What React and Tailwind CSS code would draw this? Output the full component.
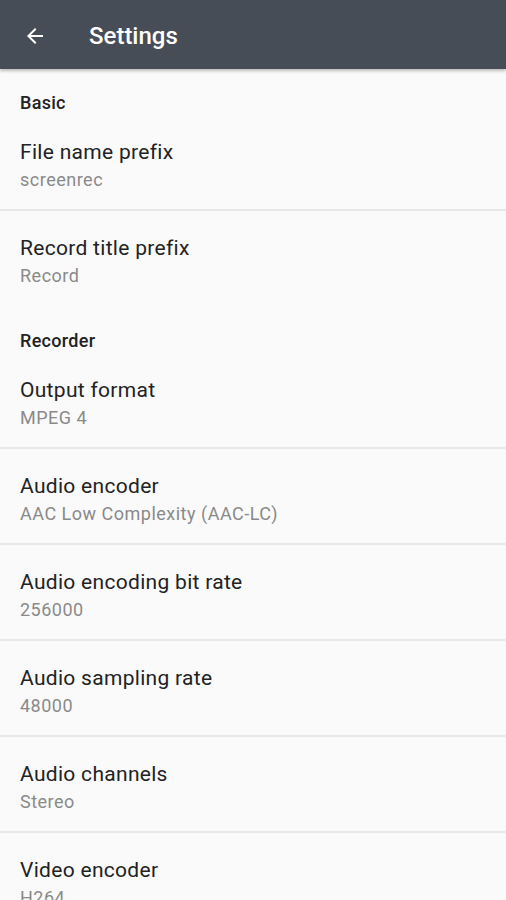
const sections = [
  {
    title: 'Basic',
    items: [
      { title: 'File name prefix', value: 'screenrec' },
      { title: 'Record title prefix', value: 'Record' },
    ],
  },
  {
    title: 'Recorder',
    items: [
      { title: 'Output format', value: 'MPEG 4' },
      { title: 'Audio encoder', value: 'AAC Low Complexity (AAC-LC)' },
      { title: 'Audio encoding bit rate', value: '256000' },
      { title: 'Audio sampling rate', value: '48000' },
      { title: 'Audio channels', value: 'Stereo' },
      { title: 'Video encoder', value: 'H264' },
      { title: 'Video resolution', value: '1280x720' },
    ],
  },
]

function BackArrow() {
  return (
    <svg width="24" height="24" viewBox="0 0 24 24" fill="#ffffff">
      <path d="M20 11H7.83l5.59-5.59L12 4l-8 8 8 8 1.41-1.41L7.83 13H20v-2z" />
    </svg>
  )
}

function Pref({ title, value, last }) {
  return (
    <div className={'h-[96px] pl-5 pt-[23px] ' + (last ? '' : 'border-b-2 border-[#e8e8e8]')}>
      <div className="text-[21px] leading-[28px] tracking-[0.3px] text-[#222222]">{title}</div>
      <div className="text-[18px] leading-[28px] tracking-[0.5px] text-[#8a8a8a]">{value}</div>
    </div>
  )
}

export default function App() {
  return (
    <div className="h-[900px] overflow-hidden bg-[#fafafa]" style={{ fontFamily: 'Roboto, "Noto Sans", sans-serif' }}>
      <header className="h-[69px] bg-[#474d56] flex items-center pl-[23px] pt-[3px] relative z-10 shadow-[0_2px_3px_rgba(0,0,0,0.25)]">
        <BackArrow />
        <h1 className="ml-[42px] text-[24px] font-medium text-white">Settings</h1>
      </header>
      <main>
        {sections.map((s) => (
          <section key={s.title}>
            <div className="h-[46px] pl-5 pt-[23px] text-[18px] leading-[22px] tracking-[0.3px] font-medium text-[#222222]">{s.title}</div>
            {s.items.map((it, i) => (
              <Pref key={it.title} {...it} last={i === s.items.length - 1} />
            ))}
          </section>
        ))}
      </main>
    </div>
  )
}
